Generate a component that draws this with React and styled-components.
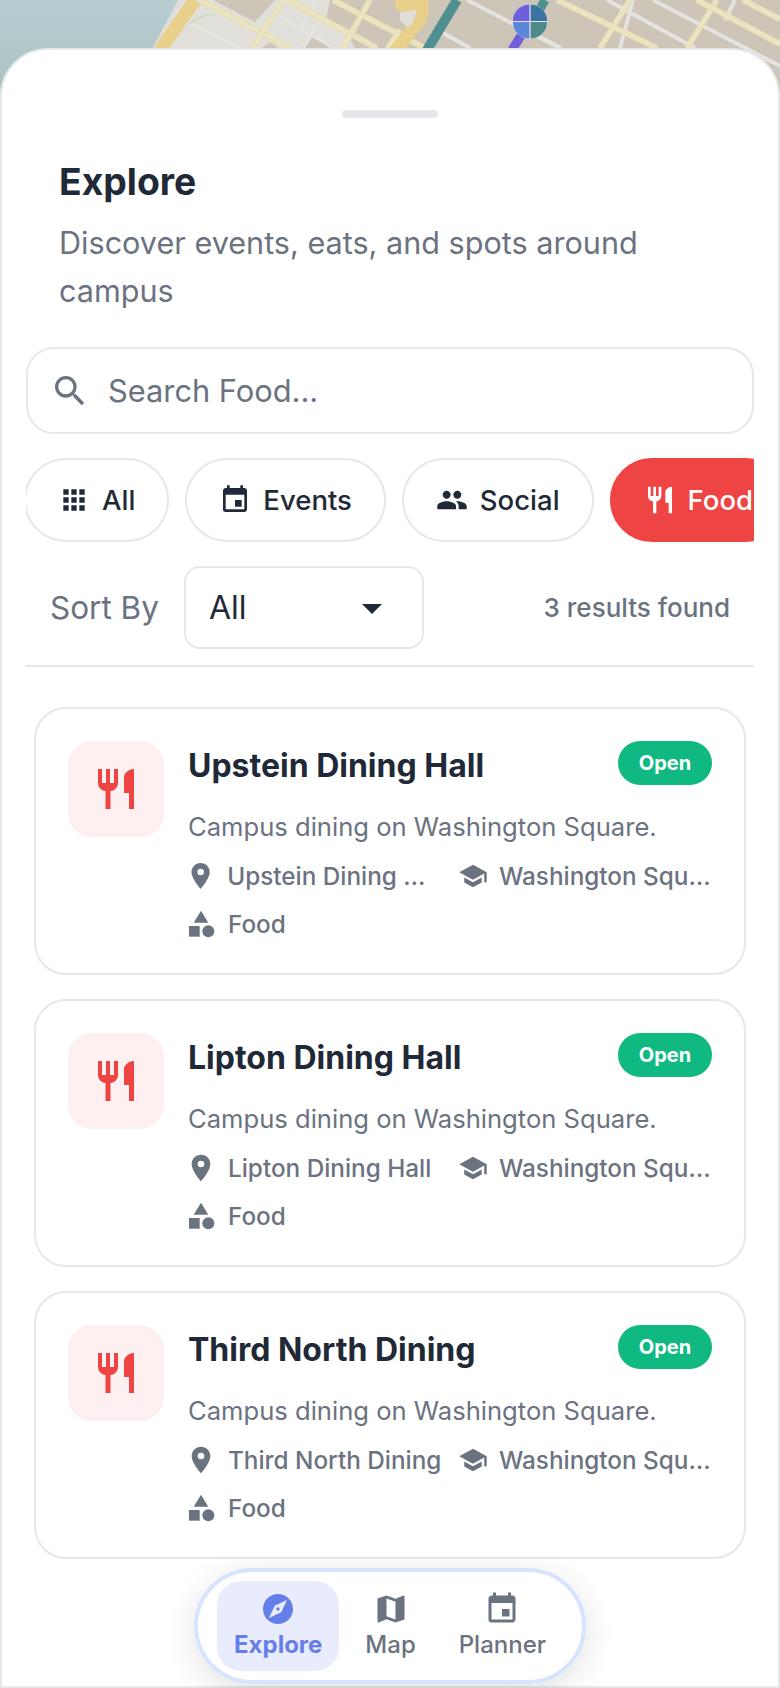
import React from 'react'
import styled, { createGlobalStyle } from 'styled-components'
import {
  MdSearch, MdApps, MdEvent, MdPeople, MdRestaurant, MdArrowDropDown,
  MdPlace, MdSchool, MdCategory, MdExplore, MdMap,
} from 'react-icons/md'

const GlobalStyle = createGlobalStyle`
  html, body {
    margin: 0;
    padding: 0;
    background: #fff;
    font-family: Inter, "Liberation Sans", sans-serif;
  }
  * { box-sizing: border-box; }
`

const Page = styled.div`
  position: relative;
  width: 780px;
  height: 1688px;
  overflow: hidden;
  padding-top: 48px;
`

const MapLayer = styled.svg`
  position: absolute;
  top: 0;
  left: 0;
  width: 780px;
  height: 110px;
`

const Sheet = styled.div`
  position: relative;
  height: 1640px;
  overflow: hidden;
  background: #fff;
  border: 2px solid #e5e7eb;
  border-radius: 48px 48px 0 0;
  padding: 60px 24px 0;
`

const Handle = styled.div`
  width: 96px;
  height: 8px;
  margin: 0 auto;
  border-radius: 4px;
  background: #e5e7eb;
`

const Header = styled.header`
  padding: 37px 32px 0 33px;
`

const Title = styled.h1`
  margin: 0;
  font-size: 37.3px;
  line-height: 54px;
  font-weight: 700;
  color: #1f2937;
`

const Subtitle = styled.p`
  margin: 10px 0 0;
  font-size: 30.6px;
  line-height: 48px;
  font-weight: 400;
  color: #6b7280;
`

const SearchBox = styled.div`
  display: flex;
  align-items: center;
  gap: 18px;
  height: 87px;
  margin-top: 32px;
  padding: 0 22px;
  border: 2px solid #e5e7eb;
  border-radius: 28px;
  font-size: 30.8px;
  color: #6b7280;
`

const ChipRow = styled.div`
  display: flex;
  gap: 16px;
  margin-top: 24px;
  overflow: hidden;
`

const Chip = styled.div`
  flex: none;
  display: flex;
  align-items: center;
  gap: 12px;
  height: 84px;
  padding: 0 32px;
  border: 2px solid ${(p) => (p.$active ? '#ef4444' : '#e5e7eb')};
  border-radius: 42px;
  background: ${(p) => (p.$active ? '#ef4444' : '#fff')};
  color: ${(p) => (p.$active ? '#fff' : '#1f2937')};
  font-size: 27.5px;
  font-weight: 500;
  &:first-child { margin-left: -2px; }
`

const SortRow = styled.div`
  display: flex;
  align-items: center;
  margin-top: 24px;
  padding: 0 24px;
  height: 83px;
`

const SortLabel = styled.span`
  font-size: 31.5px;
  color: #6b7280;
  margin-right: 25px;
`

const Select = styled.div`
  display: flex;
  align-items: center;
  justify-content: space-between;
  width: 240px;
  height: 83px;
  padding: 0 26px 0 23px;
  border: 2px solid #e5e7eb;
  border-radius: 16px;
  font-size: 32px;
  color: #1f2937;
`

const Results = styled.span`
  margin-left: auto;
  font-size: 26px;
  font-weight: 500;
  color: #6b7280;
`

const Divider = styled.div`
  height: 2px;
  margin-top: 16px;
  background: #e5e7eb;
`

const List = styled.div`
  display: flex;
  flex-direction: column;
  gap: 24px;
  margin-top: 40px;
  padding: 0 8px;
`

const Card = styled.article`
  display: flex;
  gap: 24px;
  height: 268px;
  padding: 32px;
  border: 2px solid #e5e7eb;
  border-radius: 32px;
  background: #fff;
`

const IconTile = styled.div`
  flex: none;
  display: flex;
  align-items: center;
  justify-content: center;
  width: 96px;
  height: 96px;
  border-radius: 24px;
  background: #fef0f0;
  color: #ef4444;
`

const CardBody = styled.div`
  flex: 1;
  min-width: 0;
`

const CardTop = styled.div`
  display: flex;
  align-items: flex-start;
  justify-content: space-between;
`

const CardTitle = styled.h2`
  margin: 0;
  font-size: 32px;
  line-height: 50px;
  font-weight: 700;
  color: #1f2937;
`

const Badge = styled.span`
  display: flex;
  align-items: center;
  justify-content: center;
  width: 94px;
  height: 44px;
  border-radius: 22px;
  background: #10b981;
  color: #fff;
  font-size: 20px;
  font-weight: 700;
`

const Description = styled.p`
  margin: 18px 0 0;
  font-size: 25.6px;
  line-height: 36px;
  color: #6b7280;
`

const Meta = styled.div`
  display: grid;
  grid-template-columns: 257px 253px;
  column-gap: 16px;
  row-gap: 16px;
  margin-top: 15px;
  margin-left: -3px;
`

const MetaItem = styled.div`
  display: flex;
  align-items: center;
  gap: 11px;
  height: 32px;
  min-width: 0;
  color: #6b7280;
  font-size: 24.3px;
  font-weight: 500;
`

const MetaText = styled.span`
  white-space: nowrap;
  overflow: hidden;
  text-overflow: ellipsis;
  min-width: 0;
`

const Nav = styled.nav`
  position: absolute;
  left: 194px;
  bottom: 4px;
  display: flex;
  gap: 9px;
  width: 392px;
  height: 116px;
  padding: 9px 19px;
  border: 4px solid #d6e4fe;
  border-radius: 58px;
  background: rgba(255, 255, 255, 0.95);
  box-shadow: 0 8px 32px rgba(0, 0, 0, 0.12);
`

const NavItem = styled.div`
  display: flex;
  flex-direction: column;
  align-items: center;
  justify-content: center;
  gap: 2px;
  padding: 0 17px;
  border-radius: 24px;
  background: ${(p) => (p.$active ? 'rgba(102, 126, 234, 0.15)' : 'transparent')};
  color: ${(p) => (p.$active ? '#667eea' : '#6b7280')};
  font-size: 24px;
  line-height: 32px;
  font-weight: ${(p) => (p.$active ? 700 : 500)};
`

const yellowRoads = [
  [200, 0, 290, 48], [287, 0, 377, 48], [333, 0, 425, 48], [283, 0, 253, 48],
  [370, 0, 343, 48], [400, 30, 388, 48], [557, 0, 657, 48], [630, 0, 600, 48],
  [717, 0, 687, 48], [697, 0, 780, 44], [743, 0, 780, 19],
]

const whiteRoads = [
  [190, 23, 240, 48], [316, 0, 300, 28], [280, 17, 333, 47], [320, 20, 303, 48],
  [467, 0, 560, 48], [443, 33, 470, 48], [540, 37, 561, 48], [607, 0, 695, 48],
  [653, 0, 780, 66], [633, 0, 620, 48], [735, 0, 725, 20],
]

const blocks = [
  '213,0 275,0 255,22',
  '330,0 400,0 400,30 385,48 355,48 345,30 326,20',
  '300,48 312,36 330,48',
  '262,48 270,42 278,48',
  '400,0 780,0 780,110 400,110',
]

const MapBackdrop = () => (
  <MapLayer viewBox="0 0 780 110">
    <defs>
      <linearGradient id="water" x1="0" y1="0" x2="0" y2="1">
        <stop offset="0" stopColor="#b8cdd1" />
        <stop offset="1" stopColor="#a8c0c1" />
      </linearGradient>
    </defs>
    <rect width="780" height="110" fill="url(#water)" />
    <polygon points="178,0 400,0 400,110 120,110" fill="#e0dfd9" />
    {blocks.map((points) => <polygon key={points} points={points} fill="#cdc6b8" />)}
    {whiteRoads.map(([x1, y1, x2, y2]) => (
      <line key={`${x1}-${y1}`} x1={x1} y1={y1} x2={x2} y2={y2} stroke="#e4e3df" strokeWidth="4" />
    ))}
    {yellowRoads.map(([x1, y1, x2, y2]) => (
      <g key={`${x1}-${y1}`}>
        <line x1={x1} y1={y1} x2={x2} y2={y2} stroke="#ecdcb0" strokeWidth="6" />
        <line x1={x1} y1={y1} x2={x2} y2={y2} stroke="#e9e5c3" strokeWidth="4" />
      </g>
    ))}
    <line x1="195" y1="0" x2="160" y2="50" stroke="#e8cf8a" strokeWidth="13" />
    <path d="M190 24 Q198 15 214 15" fill="none" stroke="#cddcbd" strokeWidth="2" />
    <path d="M395 0H428Q432 20 418 32L405 50H388L405 28Q410 18 395 8Z" fill="#e8cf8a" />
    <path d="M400 12L416 10Q416 20 408 28L400 20Z" fill="#e0dfd9" />
    <line x1="457" y1="0" x2="427" y2="50" stroke="#4f8f8f" strokeWidth="10" />
    <line x1="545" y1="0" x2="537" y2="14" stroke="#4f8f8f" strokeWidth="9" />
    <line x1="522" y1="34" x2="512" y2="50" stroke="#6f5fdc" strokeWidth="9" />
    <circle cx="530" cy="21.5" r="17.5" fill="#e4e3ea" />
    <path d="M530 21.5V5A16.5 16.5 0 0 0 513.5 21.5Z" fill="#6f5fdc" transform="translate(-0.6 -0.6)" />
    <path d="M530 21.5V5A16.5 16.5 0 0 1 546.5 21.5Z" fill="#3b74a3" transform="translate(0.6 -0.6)" />
    <path d="M530 21.5H513.5A16.5 16.5 0 0 0 530 38Z" fill="#5a87d8" transform="translate(-0.6 0.6)" />
    <path d="M530 21.5H546.5A16.5 16.5 0 0 1 530 38Z" fill="#4f8a8a" transform="translate(0.6 0.6)" />
  </MapLayer>
)

const chips = [
  { label: 'All', Icon: MdApps },
  { label: 'Events', Icon: MdEvent },
  { label: 'Social', Icon: MdPeople },
  { label: 'Food', Icon: MdRestaurant, active: true },
]

const places = ['Upstein Dining Hall', 'Lipton Dining Hall', 'Third North Dining']

const PlaceCard = ({ name }) => (
  <Card>
    <IconTile><MdRestaurant size={48} /></IconTile>
    <CardBody>
      <CardTop>
        <CardTitle>{name}</CardTitle>
        <Badge>Open</Badge>
      </CardTop>
      <Description>Campus dining on Washington Square.</Description>
      <Meta>
        <MetaItem><MdPlace size={32} /><MetaText>{name}</MetaText></MetaItem>
        <MetaItem><MdSchool size={32} /><MetaText>Washington Square</MetaText></MetaItem>
        <MetaItem><MdCategory size={32} /><MetaText>Food</MetaText></MetaItem>
      </Meta>
    </CardBody>
  </Card>
)

export default function App() {
  return (
    <Page>
      <GlobalStyle />
      <MapBackdrop />
      <Sheet>
        <Handle />
        <Header>
          <Title>Explore</Title>
          <Subtitle>Discover events, eats, and spots around campus</Subtitle>
        </Header>
        <SearchBox><MdSearch size={40} />Search Food...</SearchBox>
        <ChipRow>
          {chips.map(({ label, Icon, active }) => (
            <Chip key={label} $active={active}><Icon size={32} />{label}</Chip>
          ))}
        </ChipRow>
        <SortRow>
          <SortLabel>Sort By</SortLabel>
          <Select>All<MdArrowDropDown size={48} /></Select>
          <Results>3 results found</Results>
        </SortRow>
        <Divider />
        <List>
          {places.map((name) => <PlaceCard key={name} name={name} />)}
        </List>
      </Sheet>
      <Nav>
        <NavItem $active><MdExplore size={36} />Explore</NavItem>
        <NavItem><MdMap size={36} />Map</NavItem>
        <NavItem><MdEvent size={36} />Planner</NavItem>
      </Nav>
    </Page>
  )
}
